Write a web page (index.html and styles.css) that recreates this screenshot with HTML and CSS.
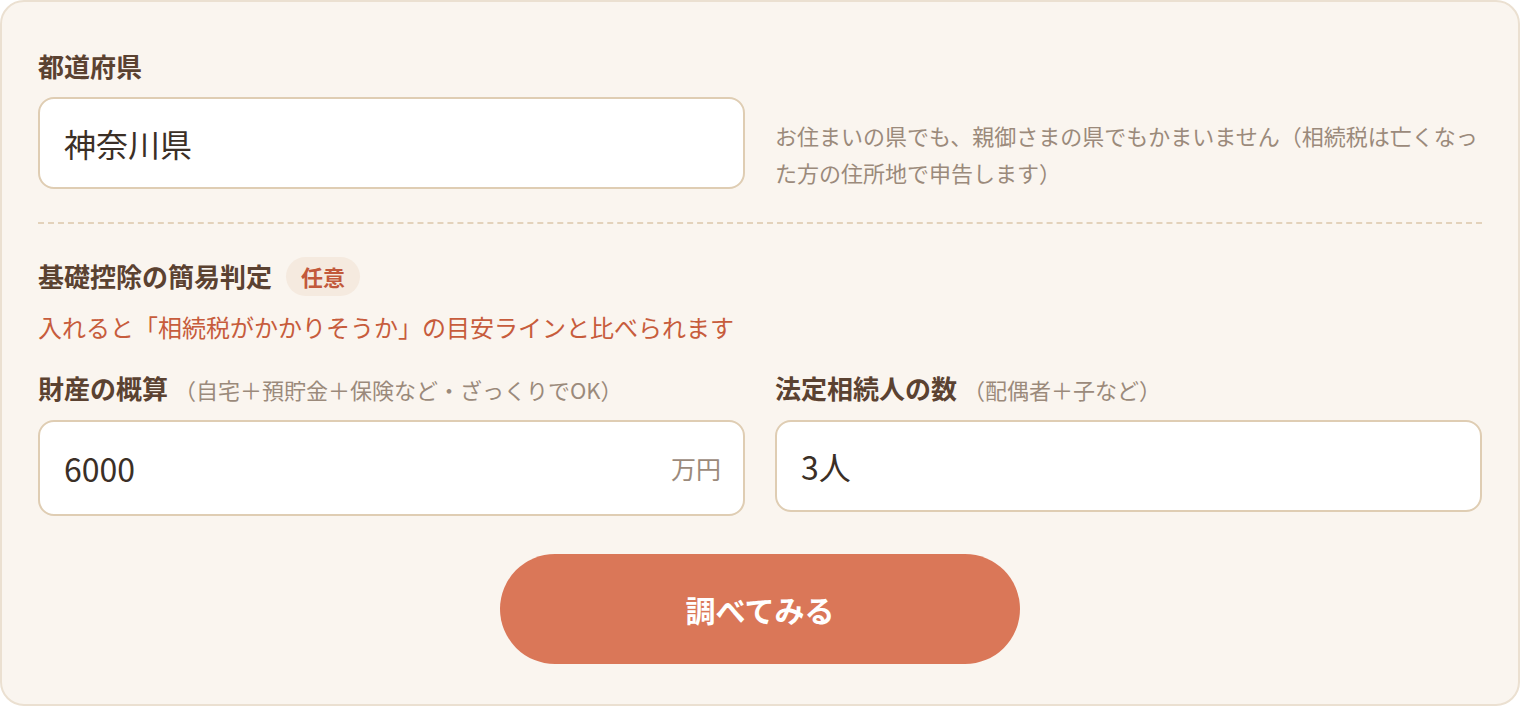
FILE: index.html
```html
<!DOCTYPE html>
<html lang="ja">
<head>
    <meta charset="UTF-8">
    <meta name="viewport" content="width=device-width, initial-scale=1.0">
    <title>相続税かんたん判定</title>
    <link rel="stylesheet" href="styles.css">
</head>
<body>
    <div class="card">
        <div class="row">
            <div class="field">
                <label class="label" for="pref">都道府県</label>
                <div class="input">
                    <input type="text" id="pref" value="神奈川県">
                </div>
            </div>
            <p class="hint">お住まいの県でも、親御さまの県でもかまいません（相続税は亡くなった方の住所地で申告します）</p>
        </div>

        <div class="divider"></div>

        <div class="section-title">
            <span>基礎控除の簡易判定</span>
            <span class="badge">任意</span>
        </div>
        <p class="note">入れると「相続税がかかりそうか」の目安ラインと比べられます</p>

        <div class="row">
            <div class="field">
                <label class="label" for="asset">財産の概算<span class="sub">（自宅＋預貯金＋保険など・ざっくりでOK）</span></label>
                <div class="input tall">
                    <input type="text" id="asset" value="6000">
                    <span class="unit">万円</span>
                </div>
            </div>
            <div class="field">
                <label class="label" for="heirs">法定相続人の数<span class="sub">（配偶者＋子など）</span></label>
                <div class="input">
                    <input type="text" id="heirs" value="3人">
                </div>
            </div>
        </div>

        <div class="actions">
            <button type="button">調べてみる</button>
        </div>
    </div>
</body>
</html>
```

FILE: styles.css
```css
body {
    font-family: "Noto Sans CJK JP", "Noto Sans", sans-serif;
    background-color: #ffffff;
    margin: 0;
    padding: 0;
}
.card {
    height: 706px;
    box-sizing: border-box;
    padding: 44px 36px 40px;
    background: #faf5ef;
    border: 2px solid #ebe0d1;
    border-radius: 24px;
}
.row {
    display: grid;
    grid-template-columns: 1fr 1fr;
    gap: 30px;
}
.field {
    display: flex;
    flex-direction: column;
}
.label {
    font-size: 26px;
    line-height: 40px;
    font-weight: 700;
    color: #5b4231;
    margin-bottom: 11px;
}
.sub {
    font-size: 22px;
    font-weight: 400;
    color: #9b8a7b;
    margin-left: 6px;
}
.input {
    display: flex;
    align-items: center;
    height: 92px;
    box-sizing: border-box;
    padding: 0 22px 0 24px;
    background: white;
    border: 2px solid #dfcdb3;
    border-radius: 16px;
}
.input.tall {
    height: 96px;
}
.input input {
    flex: 1;
    min-width: 0;
    border: none;
    outline: none;
    padding: 0;
    background: transparent;
    font-family: inherit;
    font-size: 32px;
    color: #3b2f26;
}
.unit {
    font-size: 25px;
    color: #9b8a7b;
}
.hint {
    margin: 0;
    padding-top: 71px;
    font-size: 22px;
    line-height: 37px;
    color: #9b8a7b;
}
.divider {
    margin: 31px 0 32px;
    border-top: 2px dashed #e3d2bb;
}
.section-title {
    display: flex;
    align-items: center;
    gap: 14px;
    font-size: 26px;
    line-height: 40px;
    font-weight: 700;
    color: #5b4231;
}
.badge {
    height: 39px;
    padding: 0 15px;
    border-radius: 20px;
    background: #f5eadf;
    color: #c2593b;
    font-size: 22px;
    line-height: 39px;
}
.note {
    margin: 13px 0 23px;
    font-size: 24px;
    line-height: 36px;
    color: #c75c3c;
}
.actions {
    display: flex;
    justify-content: center;
    margin-top: 38px;
}
button {
    width: 520px;
    height: 110px;
    border: none;
    border-radius: 55px;
    background-color: #da7758;
    color: white;
    font-family: inherit;
    font-size: 30px;
    font-weight: 700;
    cursor: pointer;
}
```
